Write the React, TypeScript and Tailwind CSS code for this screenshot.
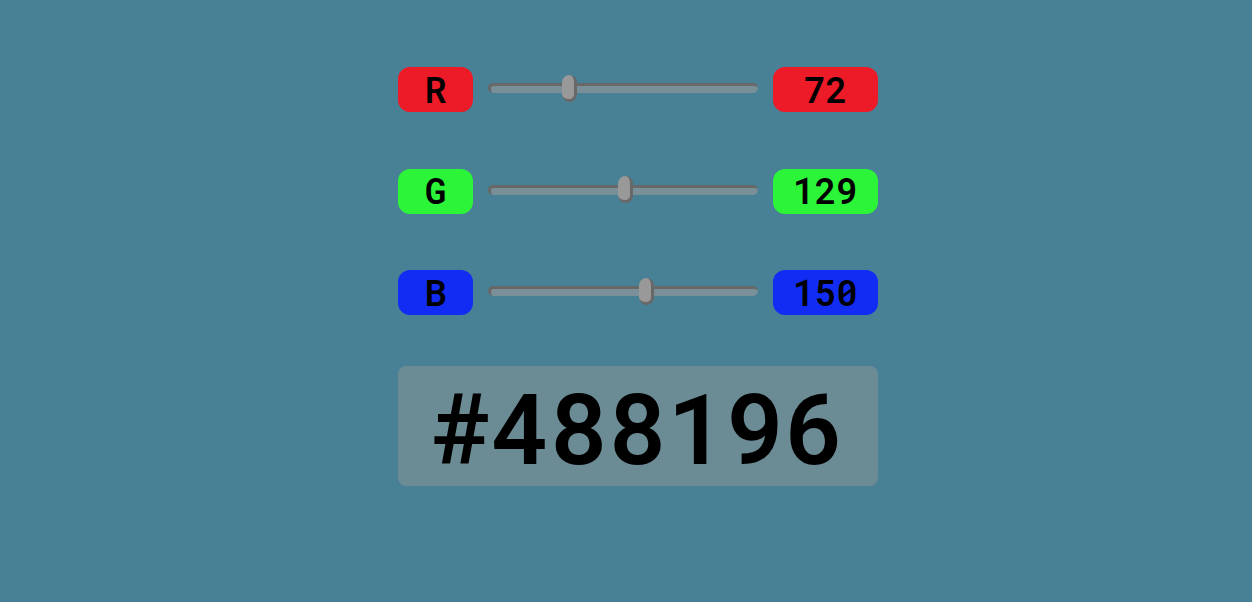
import { useState } from "react";

const track = "h-[10px] rounded-[5px] border-t-[3px] border-l-[3px] border-[#686868] bg-[#7a9098] pb-[3px]";
const thumb =
  "[&::-webkit-slider-thumb]:appearance-none [&::-webkit-slider-thumb]:box-border [&::-webkit-slider-thumb]:h-[27px] [&::-webkit-slider-thumb]:w-[15px] [&::-webkit-slider-thumb]:rounded-[8px] [&::-webkit-slider-thumb]:border-r-[3px] [&::-webkit-slider-thumb]:border-b-[3px] [&::-webkit-slider-thumb]:border-[#686868] [&::-webkit-slider-thumb]:bg-[#999999]";

const channels = [
  { name: "R", badge: "bg-[#ed1a27]" },
  { name: "G", badge: "bg-[#2cf438]" },
  { name: "B", badge: "bg-[#122cf3]" },
];

export default function App() {
  const [values, setValues] = useState([72, 129, 150]);
  const hex = "#" + values.map((v) => v.toString(16).padStart(2, "0")).join("").toUpperCase();

  return (
    <main
      className="flex min-h-screen flex-col items-center pt-[67px] pl-6 font-['Roboto_Mono','Roboto',monospace] font-semibold text-black"
      style={{ backgroundColor: hex }}
    >
      <div className="flex w-full max-w-[480px] flex-col gap-[51px]">
        <div className="grid h-[248px] content-between">
          {channels.map((channel, i) => (
            <div key={channel.name} className="flex items-center gap-[15px]">
              <label
                htmlFor={channel.name}
                className={`flex h-[45px] w-[75px] items-center justify-center rounded-xl pb-0.5 text-4xl leading-none ${channel.badge}`}
              >
                {channel.name}
              </label>
              <input
                id={channel.name}
                type="range"
                min={0}
                max={255}
                value={values[i]}
                onChange={(e) => setValues(values.map((v, j) => (j === i ? Number(e.target.value) : v)))}
                className={`mb-[3px] min-w-0 flex-1 appearance-none ${track} ${thumb}`}
              />
              <output
                htmlFor={channel.name}
                className={`flex h-[45px] w-[105px] items-center justify-center rounded-xl pb-0.5 text-4xl leading-none ${channel.badge}`}
              >
                {values[i]}
              </output>
            </div>
          ))}
        </div>
        <output className="flex h-[120px] items-center justify-center rounded-lg bg-[#6b8b95] text-[98px] leading-none">
          {hex}
        </output>
      </div>
    </main>
  );
}
